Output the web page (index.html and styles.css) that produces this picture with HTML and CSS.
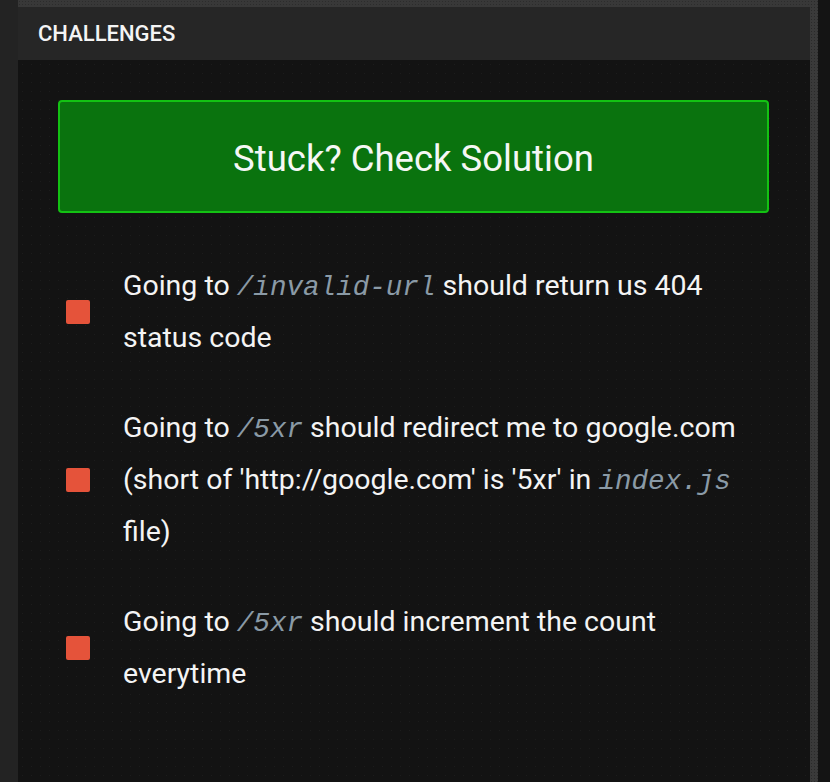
FILE: index.html
```html
<!DOCTYPE html>
<html>
<head>
<meta charset="utf-8">
<link rel="stylesheet" href="styles.css">
</head>
<body>
<div class="frame">
  <div class="gutter"></div>
  <div class="panel">
    <div class="topstrip"></div>
    <div class="header">CHALLENGES</div>
    <div class="content">
      <div class="solution">Stuck? Check Solution</div>
      <ul class="tasks">
        <li class="task"><span class="mark"></span><p class="text">Going to <code>/invalid-url</code> should return us 404 status code</p></li>
        <li class="task"><span class="mark"></span><p class="text">Going to <code>/5xr</code> should redirect me to google.com (short of 'http://google.com' is '5xr' in <code>index.js</code> file)</p></li>
        <li class="task"><span class="mark"></span><p class="text">Going to <code>/5xr</code> should increment the count everytime</p></li>
      </ul>
    </div>
  </div>
  <div class="scrollbar"></div>
  <div class="outside"></div>
</div>
</body>
</html>
```
FILE: styles.css
```css
html, body {
  margin: 0;
  padding: 0;
  height: 100%;
  background: #141414;
}
body {
  font-family: Roboto, "Liberation Sans", sans-serif;
  color: #f2f2f2;
  overflow: hidden;
}
.frame {
  display: flex;
  height: 782px;
}
.gutter {
  width: 18px;
  background: #232323;
  flex: none;
}
.panel {
  width: 792px;
  flex: none;
  display: flex;
  flex-direction: column;
}
.topstrip {
  height: 7px;
  background-color: #383838;
  background-image: radial-gradient(#2c2c2c 0.6px, transparent 0.8px);
  background-size: 3px 3px;
}
.header {
  height: 53px;
  background: #262626;
  display: flex;
  align-items: center;
  padding-left: 20px;
  font-size: 22px;
  font-weight: 500;
  color: #f4f4f4;
}
.content {
  flex: 1;
  background-color: #131313;
  background-image: radial-gradient(#1c1c1c 0.7px, transparent 0.9px);
  background-size: 9px 9px;
  padding: 40px 41px 0 40px;
}
.solution {
  height: 109px;
  box-sizing: border-box;
  height: 113px;
  padding-top: 4px;
  border: 2px solid #13c213;
  border-radius: 4px;
  background: #0a730e;
  display: flex;
  align-items: center;
  justify-content: center;
  font-size: 36.5px;
  color: #f5f7f5;
  font-weight: 400;
}
.tasks {
  list-style: none;
  margin: 0;
  padding: 0;
  margin-top: 47px;
  display: flex;
  flex-direction: column;
  gap: 38px;
}
.task {
  display: flex;
  align-items: center;
  padding-left: 8px;
}
.mark {
  width: 24px;
  height: 24px;
  border-radius: 2px;
  background: #e5533a;
  flex: none;
  margin-right: 33px;
}
.text {
  margin: 0;
  font-size: 28.5px;
  line-height: 52px;
  color: #f4f4f4;
}
.text code {
  font-family: "Liberation Mono", "DejaVu Sans Mono", monospace;
  font-style: italic;
  font-size: 27.6px;
  line-height: 1;
  color: #8a9aa6;
}
.scrollbar {
  width: 8px;
  flex: none;
  background-color: #3a3a3a;
  background-image: radial-gradient(#2a2a2a 0.6px, transparent 0.8px);
  background-size: 3px 3px;
}
.outside {
  flex: 1;
  background: #141414;
}
```
